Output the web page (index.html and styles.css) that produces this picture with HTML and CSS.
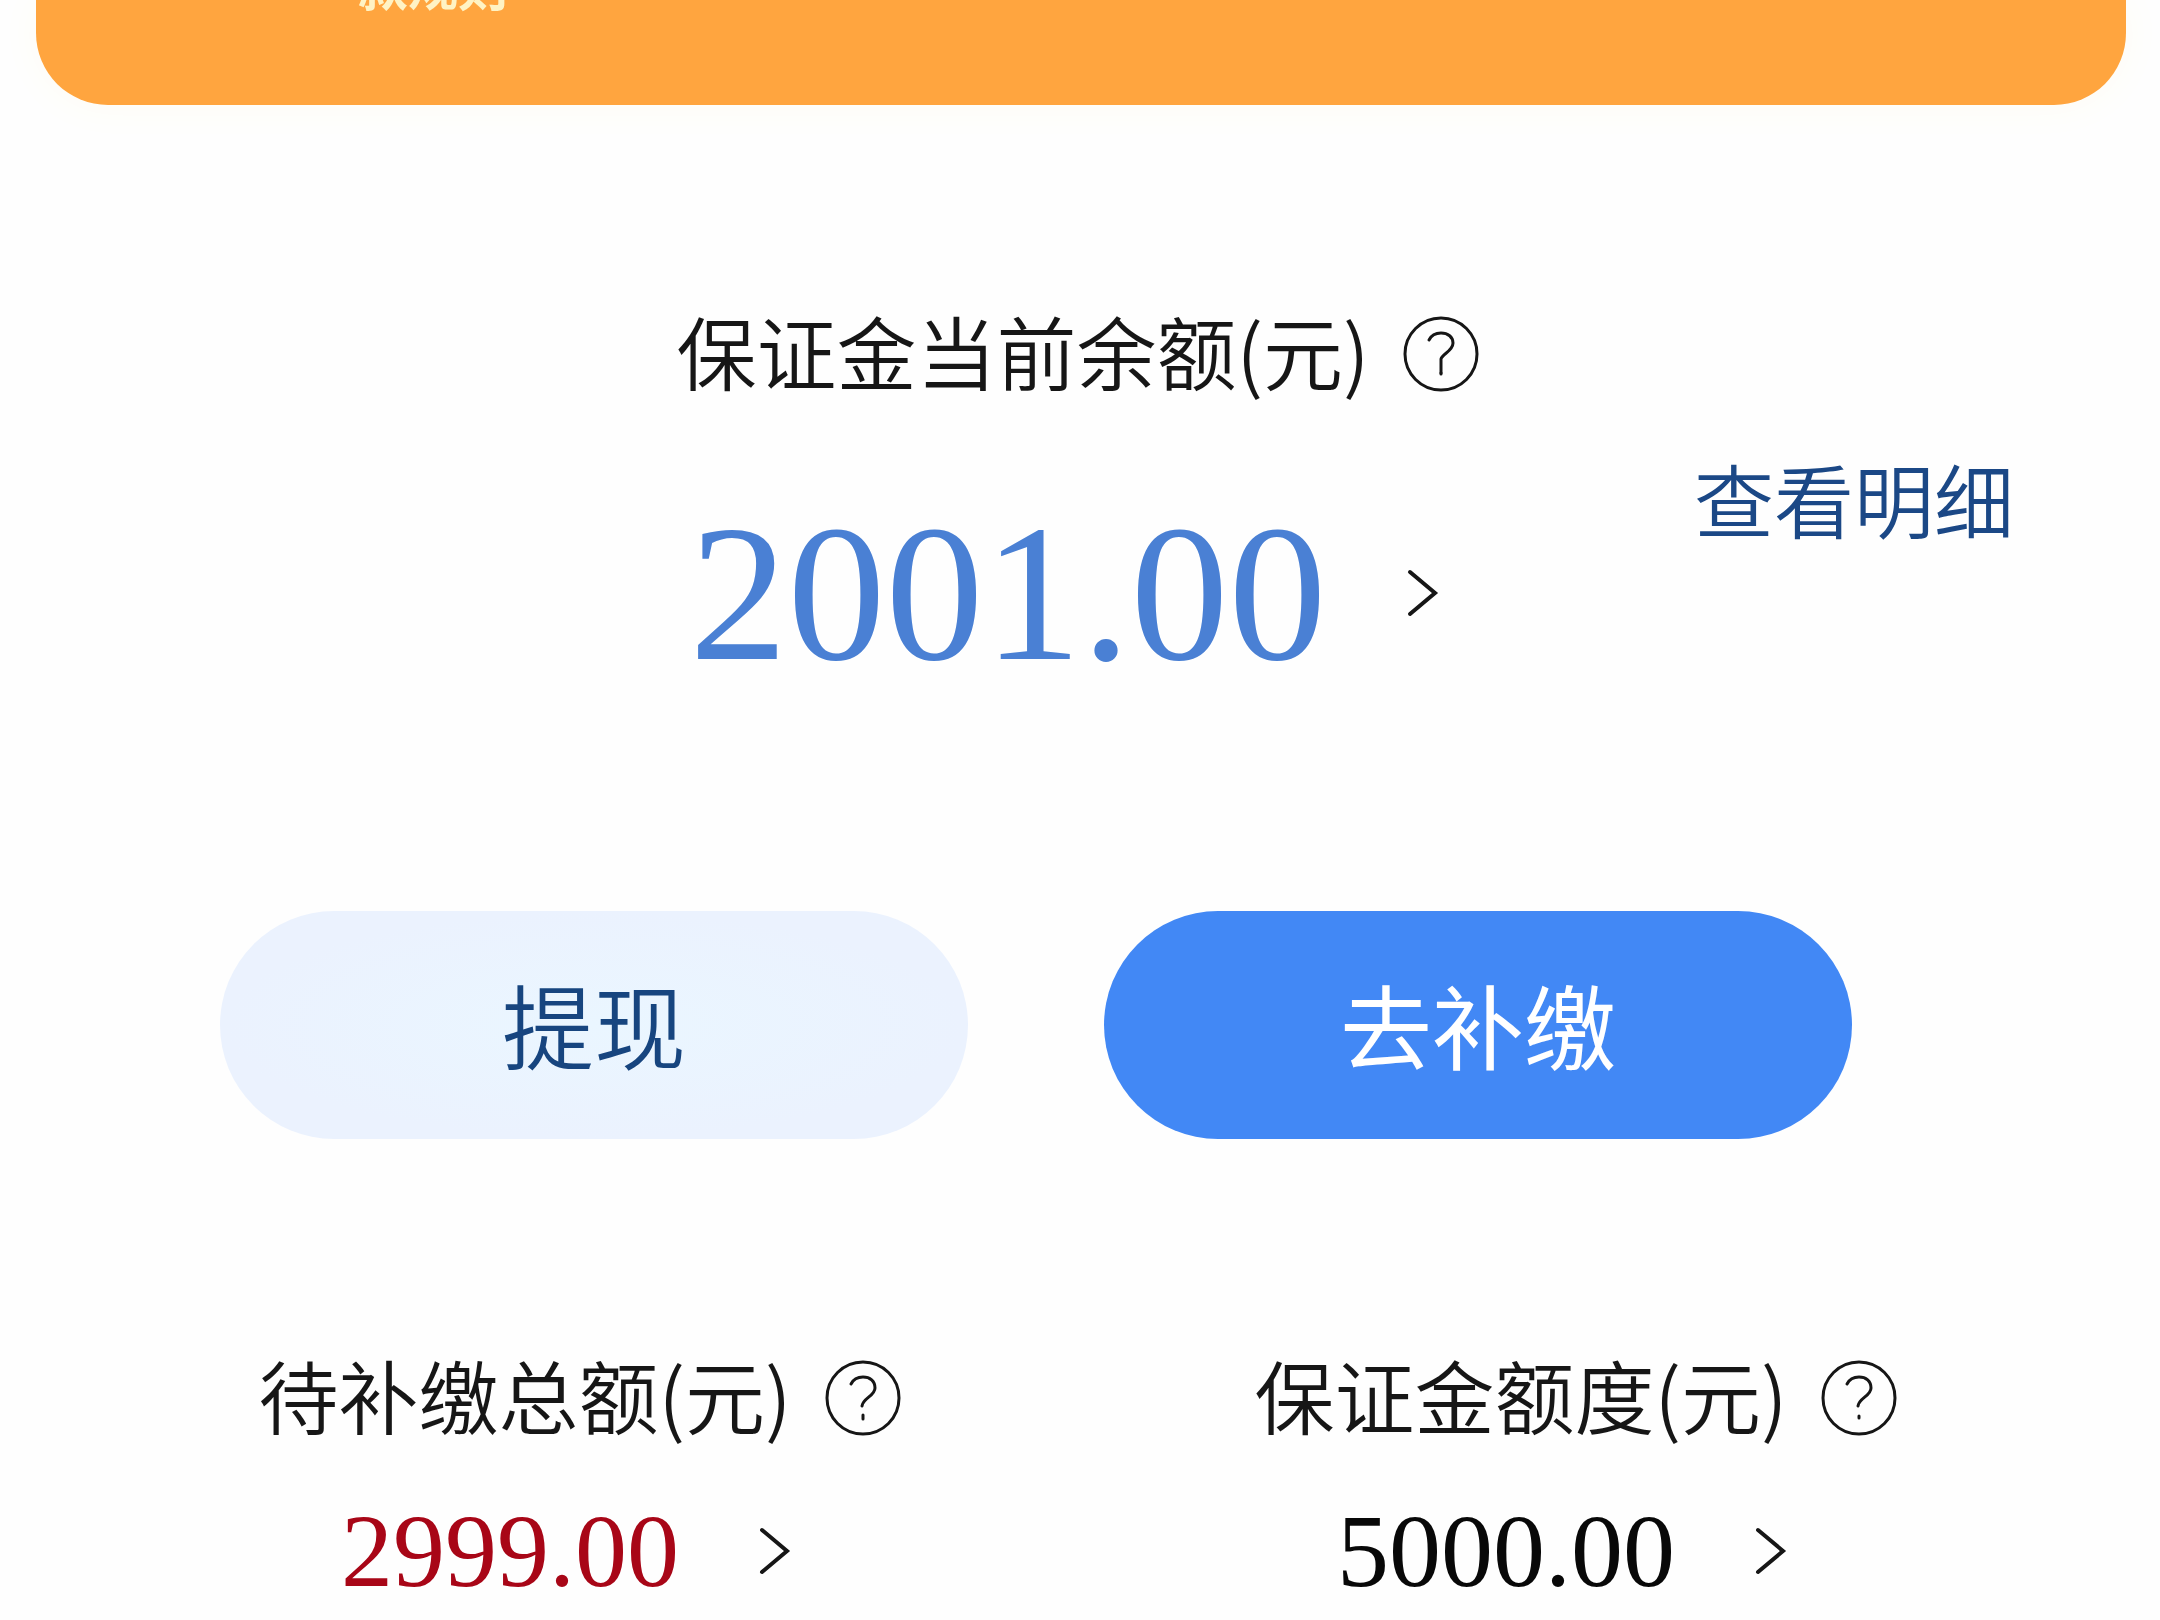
FILE: index.html
```html
<!DOCTYPE html>
<html lang="zh-CN">
<head>
<meta charset="utf-8">
<meta name="viewport" content="width=device-width, initial-scale=1">
<title>保证金</title>
<link rel="stylesheet" href="styles.css">
</head>
<body>
<header class="banner"><p class="banner-text">款规则</p></header>
<main class="page">
  <section class="summary">
    <h1 class="label summary-label">保证金当前余额(元)
      <button class="help" type="button" aria-label="余额说明"><svg class="help-icon" viewBox="0 0 76 76"><circle cx="38" cy="38" r="36"/><path d="M26 24C29 18 34 17 38 17C45 17 50 21 50 27C50 35 39 38 38 43V57"/><path d="M38 57V58"/></svg></button>
    </h1>
    <a class="amount amount-main summary-amount" href="#balance">2001.00<svg class="chevron" viewBox="0 0 32 48"><path d="M3 3L28 24L3 45"/></svg></a>
    <a class="detail" href="#detail">查看明细</a>
  </section>
  <div class="actions">
    <button class="action action-light" type="button">提现</button>
    <button class="action action-primary" type="button">去补缴</button>
  </div>
  <section class="totals">
    <div class="total">
      <h2 class="label">待补缴总额(元)
        <button class="help" type="button" aria-label="待补缴说明"><svg class="help-icon" viewBox="0 0 76 76"><circle cx="38" cy="38" r="36"/><path d="M26 24C29 18 34 17 38 17C45 17 50 21 50 28C50 36 38 38 37 46"/><path d="M38 55V59"/></svg></button>
      </h2>
      <a class="amount amount-due" href="#due">2999.00<svg class="chevron" viewBox="0 0 32 48"><path d="M3 3L28 24L3 45"/></svg></a>
    </div>
    <div class="total">
      <h2 class="label">保证金额度(元)
        <button class="help" type="button" aria-label="额度说明"><svg class="help-icon" viewBox="0 0 76 76"><circle cx="38" cy="38" r="36"/><path d="M26 24C29 18 34 17 38 17C45 17 50 21 50 28C50 36 38 38 37 46"/><path d="M38 56V58"/></svg></button>
      </h2>
      <a class="amount" href="#quota">5000.00<svg class="chevron" viewBox="0 0 32 48"><path d="M3 3L28 24L3 45"/></svg></a>
    </div>
  </section>
</main>
</body>
</html>
```
FILE: styles.css
```css
* {
  box-sizing: border-box;
}

body {
  margin: 0;
  background: #fefefe;
  color: #161616;
  font-family: "Noto Sans CJK SC", sans-serif;
  font-weight: 350;
}

h1,
h2,
p {
  margin: 0;
  font-weight: 350;
}

button {
  border: 0;
  padding: 0;
  font: inherit;
  cursor: pointer;
}

a {
  color: inherit;
  text-decoration: none;
}

.banner {
  display: flex;
  align-items: flex-start;
  height: 105px;
  margin: 0 34px 0 36px;
  padding-left: 322px;
  border-radius: 0 0 72px 72px;
  background: #ffa53f;
  box-shadow: 0 2px 40px #fffdf4;
}

.banner-text {
  margin-top: -44px;
  color: #fff3c4;
  font-size: 50px;
  font-weight: 700;
  line-height: 56px;
}

.page {
  padding: 184px 86px 0 82px;
}

.summary {
  display: grid;
  grid-template-columns: 1fr auto 1fr;
  row-gap: 53px;
}

.label {
  display: flex;
  align-items: center;
  justify-content: center;
  gap: 34px;
  font-size: 80px;
  line-height: 120px;
  white-space: nowrap;
}

.summary-label {
  grid-column: 2;
}

.help {
  display: flex;
  margin-top: 10px;
  background: none;
  color: inherit;
}

.help-icon {
  width: 76px;
  height: 76px;
  fill: none;
  stroke: currentColor;
  stroke-width: 3;
  stroke-linecap: round;
}

.amount {
  display: flex;
  align-items: center;
  justify-content: center;
  gap: 80px;
  padding-right: 28px;
  color: #080808;
  font-family: "Liberation Serif", serif;
  font-size: 104px;
  font-weight: 400;
  line-height: 120px;
}

.summary-amount {
  grid-column: 2;
}

.amount-main {
  color: #4a80d4;
  font-size: 196px;
  line-height: 262px;
}

.amount-due {
  color: #a80617;
}

.chevron {
  width: 32px;
  height: 48px;
  fill: none;
  stroke: #161616;
  stroke-width: 4;
  stroke-linecap: round;
}

.detail {
  grid-column: 3;
  justify-self: end;
  align-self: start;
  margin-right: 60px;
  color: #1b4886;
  font-size: 80px;
  line-height: 70px;
}

.actions {
  display: grid;
  grid-template-columns: 1fr 1fr;
  gap: 136px;
  margin-top: 187px;
  padding: 0 222px 0 138px;
}

.action {
  height: 228px;
  padding-bottom: 6px;
  border-radius: 114px;
  font-size: 92px;
}

.action-light {
  background: radial-gradient(#eaf6ff, #ebf2fe 70%);
  color: #17457f;
}

.action-primary {
  background: #4288f5;
  color: #fff;
  font-weight: 400;
}

.totals {
  display: grid;
  grid-template-columns: 1fr 1fr;
  margin-top: 194px;
}

.total {
  display: grid;
  gap: 38px;
}
```
